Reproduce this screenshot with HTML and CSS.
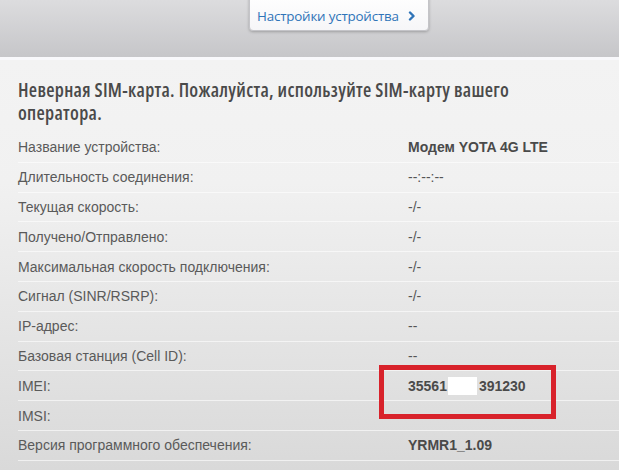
FILE: index.html
```html
<!DOCTYPE html>
<html lang="ru">
<head>
  <meta charset="UTF-8">
  <title>Модем YOTA 4G LTE</title>
  <link rel="stylesheet" href="styles.css">
</head>
<body>
  <header class="topbar">
    <a class="settings-btn" href="#">
      <span>Настройки устройства</span>
      <svg class="chev" width="8" height="10" viewBox="0 0 8 10"><path d="M2 1.5 L5.5 5 L2 8.5" fill="none" stroke="#2f74b8" stroke-width="2.4" stroke-linecap="round" stroke-linejoin="round"/></svg>
    </a>
  </header>
  <main class="panel">
    <h1>Неверная SIM-карта. Пожалуйста, используйте SIM-карту вашего оператора.</h1>
    <div class="info">
      <div class="row"><span class="label">Название устройства:</span><span class="value bold">Модем YOTA 4G LTE</span></div>
      <div class="row"><span class="label">Длительность соединения:</span><span class="value">--:--:--</span></div>
      <div class="row"><span class="label">Текущая скорость:</span><span class="value">-/-</span></div>
      <div class="row"><span class="label">Получено/Отправлено:</span><span class="value">-/-</span></div>
      <div class="row"><span class="label">Максимальная скорость подключения:</span><span class="value">-/-</span></div>
      <div class="row"><span class="label">Сигнал (SINR/RSRP):</span><span class="value">-/-</span></div>
      <div class="row"><span class="label">IP-адрес:</span><span class="value">--</span></div>
      <div class="row"><span class="label">Базовая станция (Cell ID):</span><span class="value">--</span></div>
      <div class="row imei"><span class="label">IMEI:</span><span class="value bold">35561<span class="mask"></span>391230</span><span class="mark"></span></div>
      <div class="row"><span class="label">IMSI:</span><span class="value"></span></div>
      <div class="row"><span class="label">Версия программного обеспечения:</span><span class="value bold">YRMR1_1.09</span></div>
    </div>
  </main>
</body>
</html>
```

FILE: styles.css
```css
*, *::before, *::after { box-sizing: border-box; }
body {
  margin: 0;
  width: 619px;
  height: 470px;
  overflow: hidden;
  font-family: 'Liberation Sans', Arial, sans-serif;
  background: #dcdcdc;
}
.topbar {
  height: 60px;
  background: linear-gradient(#dcdcde, #c6c6c9);
  border-bottom: 3px solid #f8f8fb;
  display: flex;
  padding-left: 249px;
}
.settings-btn {
  margin-top: -7px;
  width: 180px;
  height: 38px;
  display: flex;
  align-items: center;
  justify-content: space-between;
  padding: 7px 12px 0 7px;
  background: linear-gradient(#ffffff, #f6f6f8);
  border: 1px solid #c4c4c8;
  border-radius: 0 0 4px 4px;
  box-shadow: 0 1px 3px rgba(0,0,0,0.25);
  color: #2f74b8;
  font-family: 'Open Sans', sans-serif;
  font-size: 13.4px;
  letter-spacing: -0.2px;
  text-decoration: none;
}
.panel {
  height: 410px;
  background: linear-gradient(#f3f3f3, #f1f1f1 30%, #d9d9d9);
  padding: 19px 0 0 18px;
}
h1 {
  margin: 0 0 8px;
  width: 520px;
  font-family: 'Open Sans', sans-serif;
  font-stretch: 75%;
  font-weight: 600;
  font-size: 19px;
  letter-spacing: 0.3px;
  line-height: 23px;
  color: #4a4a4a;
}
.row {
  position: relative;
  display: flex;
  align-items: center;
  height: 29.8px;
  border-bottom: 1px solid rgba(255,255,255,0.6);
  font-size: 14px;
  color: #5a5a5a;
}
.label { width: 390px; }
.value { color: #555; }
.value.bold { font-weight: bold; color: #4a4a4a; }
.mask {
  display: inline-block;
  width: 29px;
  height: 18px;
  margin: 0 2px 0 1px;
  vertical-align: -4px;
  background: #fff;
}
.mark {
  position: absolute;
  left: 361px;
  top: -6px;
  width: 177px;
  height: 54px;
  border: 5px solid #d8222b;
}
```
